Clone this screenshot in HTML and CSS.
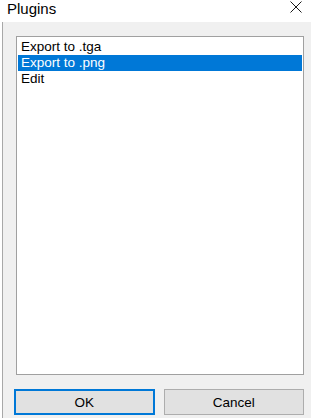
FILE: index.html
```html
<!DOCTYPE html>
<html>
<head>
<meta charset="utf-8">
<link rel="stylesheet" href="styles.css">
</head>
<body>
<div class="window">
  <div class="titlebar">
    <span class="title">Plugins</span>
    <svg class="close" width="12" height="12" viewBox="0 0 12 12"><path d="M0.5 0.5 L11.5 11.5 M11.5 0.5 L0.5 11.5" stroke="#1a1a1a" stroke-width="1" fill="none"/></svg>
  </div>
  <div class="dialog">
    <ul class="listbox">
      <li class="item">Export to .tga</li>
      <li class="item selected">Export to .png</li>
      <li class="item">Edit</li>
    </ul>
    <div class="buttons">
      <button class="btn default">OK</button>
      <button class="btn">Cancel</button>
    </div>
  </div>
</div>
</body>
</html>
```
FILE: styles.css
```css
html, body {
  margin: 0;
  padding: 0;
  background: #ffffff;
}
.window {
  width: 311px;
  height: 418px;
  display: flex;
  flex-direction: column;
  font-family: "Liberation Sans", Arial, sans-serif;
}
.titlebar {
  height: 22px;
  background: #ffffff;
  display: flex;
  align-items: flex-start;
  justify-content: space-between;
  padding: 0 9px 0 7px;
}
.title {
  font-size: 15px;
  line-height: 17px;
  color: #000;
}
.close {
  margin-top: 1px;
}
.dialog {
  flex: 1;
  margin-left: 2px;
  border-left: 1px solid #a8a8a8;
  background: #f0f0f0;
  padding: 14px 7px 0 11px;
  display: flex;
  flex-direction: column;
}
.listbox {
  list-style: none;
  margin: 0 0 0 2px;
  padding: 2px 1px 0 1px;
  height: 335px;
  background: #ffffff;
  border: 1px solid #a0a0a0;
}
.item {
  font-size: 13.5px;
  line-height: 16px;
  height: 16px;
  padding-left: 3px;
  color: #000;
  white-space: nowrap;
}
.item.selected {
  background: #0078d7;
  color: #ffffff;
}
.buttons {
  display: flex;
  gap: 9px;
  margin-top: 14px;
}
.btn {
  width: 141px;
  height: 26px;
  background: #e1e1e1;
  border: 1px solid #adadad;
  font-family: "Liberation Sans", Arial, sans-serif;
  font-size: 13.5px;
  color: #000;
  padding: 0;
}
.btn.default {
  border: 2px solid #0078d7;
}
```
